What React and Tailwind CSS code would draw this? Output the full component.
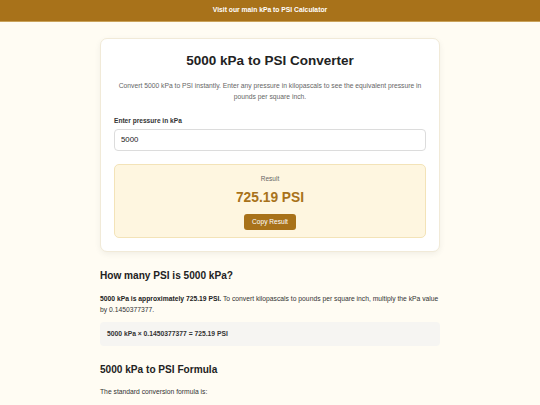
export default function App() {
  const font = { fontFamily: '"Liberation Sans", Arial, sans-serif' };
  return (
    <div className="min-h-[405px] bg-[#fffcf3] text-[#222222]" style={font}>
      <div className="h-[22px] bg-[#a8721a] flex items-center justify-center border-b border-[#c9a25a]">
        <span className="text-[6.75px] font-bold text-white">Visit our main kPa to PSI Calculator</span>
      </div>
      <div className="w-[340px] mx-auto">
        <div className="mt-[16px] bg-white rounded-[7px] border border-[#f1ead8] shadow-[0_2px_6px_rgba(0,0,0,0.06)] px-[13px] pt-[14px] pb-[13px]">
          <h1 className="text-[13.5px] leading-[16px] font-bold text-center text-[#222]">5000 kPa to PSI Converter</h1>
          <p className="mt-[10.5px] text-[6.75px] leading-[11px] text-center text-[#666]">
            Convert 5000 kPa to PSI instantly. Enter any pressure in kilopascals to see the equivalent pressure in pounds per square inch.
          </p>
          <div className="mt-[14.5px] text-[6.6px] leading-[9px] font-bold text-[#333]">Enter pressure in kPa</div>
          <div className="mt-[4px] h-[22px] rounded-[4px] border border-[#dcdcdc] bg-white flex items-center px-[6px]">
            <span className="text-[7.8px] text-[#222]">5000</span>
          </div>
          <div className="mt-[12.5px] rounded-[5px] border border-[#f3e3b8] bg-[#fef6e0] flex flex-col items-center pt-[10px] pb-[7px]">
            <div className="text-[6.5px] leading-[8px] text-[#666]">Result</div>
            <div className="mt-[7px] text-[13.75px] leading-[16px] font-bold text-[#a8721a]">725.19 PSI</div>
            <div className="mt-[8.5px] h-[16px] w-[52px] rounded-[3px] bg-[#a8721a] flex items-center justify-center">
              <span className="text-[6.6px] text-white">Copy Result</span>
            </div>
          </div>
        </div>
        <h2 className="mt-[18px] text-[10.1px] leading-[12px] font-bold">How many PSI is 5000 kPa?</h2>
        <p className="mt-[10.5px] text-[6.75px] leading-[11px] text-[#333]">
          <span className="font-bold text-[#222]">5000 kPa is approximately 725.19 PSI.</span> To convert kilopascals to pounds per square inch, multiply the kPa value by 0.1450377377.
        </p>
        <div className="mt-[7.5px] h-[24px] rounded-[4px] bg-[#f6f5f2] flex items-center px-[7px]">
          <span className="text-[6.75px] font-bold text-[#333]">5000 kPa × 0.1450377377 = 725.19 PSI</span>
        </div>
        <h2 className="mt-[18px] text-[10.1px] leading-[12px] font-bold">5000 kPa to PSI Formula</h2>
        <p className="mt-[10px] text-[6.75px] leading-[11px] text-[#333]">The standard conversion formula is:</p>
        <div className="mt-[7.5px] h-[24px] rounded-[4px] bg-[#f6f5f2]"></div>
      </div>
    </div>
  );
}
